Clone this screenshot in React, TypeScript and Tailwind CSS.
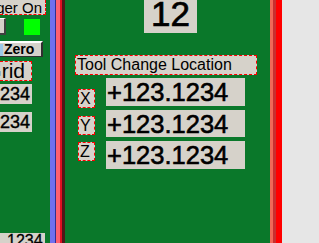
import React from "react";

const box = "bg-[#d6d2ca] text-black";
const dashed = "border-dashed border-[#ff0000]";

function ValueRow({ label, rowH, valH, labelMt }: { label: string; rowH: string; valH: string; labelMt: string }) {
  return (
    <div className={`flex items-start ${rowH}`}>
      <div className={`ml-[13px] ${labelMt} w-[17px] h-[19px] border ${dashed} ${box} flex items-center pl-[1px] text-[16px] leading-[17px]`}>
        {label}
      </div>
      <div className={`ml-[11px] w-[139px] ${valH} ${box} flex items-start pl-[1px] overflow-hidden`}>
        <span className="shrink-0 text-[25.5px] leading-[29px] whitespace-nowrap [-webkit-text-stroke:0.6px_black]">+123.1234</span>
      </div>
    </div>
  );
}

export default function App() {
  return (
    <div
      className="w-[319px] h-[243px] overflow-hidden flex bg-[#0a782a]"
      style={{ fontFamily: '"Liberation Sans", Arial, sans-serif' }}
    >
      {/* left column */}
      <div className="w-[50px] h-full flex flex-col overflow-hidden shrink-0">
        <div className={`h-[15px] w-[46px] border-r border-b ${dashed} ${box} flex justify-end items-center overflow-hidden pr-[3px]`}>
          <span className="shrink-0 text-[15px] leading-[15px] whitespace-nowrap">Trigger On</span>
        </div>
        <div className="mt-[3px] h-[17px] flex items-start">
          <div className="w-[6px] h-[17px] bg-[#d6d2ca] border-t border-t-white border-r-2 border-r-[#404040] border-b-2 border-b-[#404040]" />
          <div className="ml-[18px] mt-[1px] w-[16px] h-[16px] bg-[#00ff00]" />
        </div>
        <div className="mt-[6px] h-[16px] w-[43px] bg-[#d6d2ca] border-t-2 border-t-white border-r-2 border-r-[#303030] border-b border-b-[#303030] flex items-center">
          <div className="w-[3px] h-[12px] bg-[#9cc8e8] shrink-0" />
          <span className="ml-[1px] shrink-0 font-bold text-[14px] leading-[13px] text-black">Zero</span>
        </div>
        <div className={`mt-[4px] h-[20px] w-[32px] border-t border-r border-b ${dashed} ${box} flex justify-end items-center overflow-hidden pr-[6px]`}>
          <span className="shrink-0 text-[21px] leading-[20px] whitespace-nowrap">Grid</span>
        </div>
        <div className={`mt-[3px] h-[20px] w-[32px] ${box} flex justify-end items-center overflow-hidden pr-[2px]`}>
          <span className="shrink-0 text-[18px] leading-[18px] whitespace-nowrap [-webkit-text-stroke:0.4px_black]">+123.1234</span>
        </div>
        <div className={`mt-[8px] h-[20px] w-[32px] ${box} flex justify-end items-center overflow-hidden pr-[2px]`}>
          <span className="shrink-0 text-[18px] leading-[18px] whitespace-nowrap [-webkit-text-stroke:0.4px_black]">+123.1234</span>
        </div>
        <div className={`mt-auto h-[10px] w-[45px] ${box} flex items-start overflow-hidden pl-[7px]`}>
          <span className="shrink-0 text-[16px] leading-[16px] whitespace-nowrap [-webkit-text-stroke:0.3px_black]">1234</span>
        </div>
      </div>

      {/* left divider bars */}
      <div className="flex h-full shrink-0">
        <div className="w-[5px] bg-[#7070f0]" />
        <div className="w-[1px] bg-[#303090]" />
        <div className="w-[4px] bg-[#ff6070]" />
        <div className="w-[2px] bg-[#e01020]" />
        <div className="w-[3px] bg-[#501818]" />
      </div>

      {/* main panel */}
      <div className="w-[205px] h-full flex flex-col shrink-0">
        <div className={`ml-[79px] w-[53px] h-[33px] ${box} flex justify-center items-start`}>
          <span className="text-[35px] leading-[28px] [-webkit-text-stroke:0.7px_black]">12</span>
        </div>
        <div className={`mt-[22px] ml-[10px] w-[182px] h-[20px] border ${dashed} ${box} flex items-center pl-[1px] text-[16px] leading-[16px] whitespace-nowrap`}>
          Tool Change Location
        </div>
        <div className="mt-[3px] flex flex-col">
          <ValueRow label="X" rowH="h-[32px]" valH="h-[28px]" labelMt="mt-[11px]" />
          <ValueRow label="Y" rowH="h-[31px]" valH="h-[27px]" labelMt="mt-[6px]" />
          <ValueRow label="Z" rowH="h-[31px]" valH="h-[28px]" labelMt="mt-[1px]" />
        </div>
      </div>

      {/* right divider bars */}
      <div className="flex h-full shrink-0">
        <div className="w-[3px] bg-[#f06858]" />
        <div className="w-[3px] bg-[#c83030]" />
        <div className="w-[6px] bg-[#ff0000]" />
      </div>

      <div className="flex-1 h-full bg-[#e6e6e6]" />
    </div>
  );
}
